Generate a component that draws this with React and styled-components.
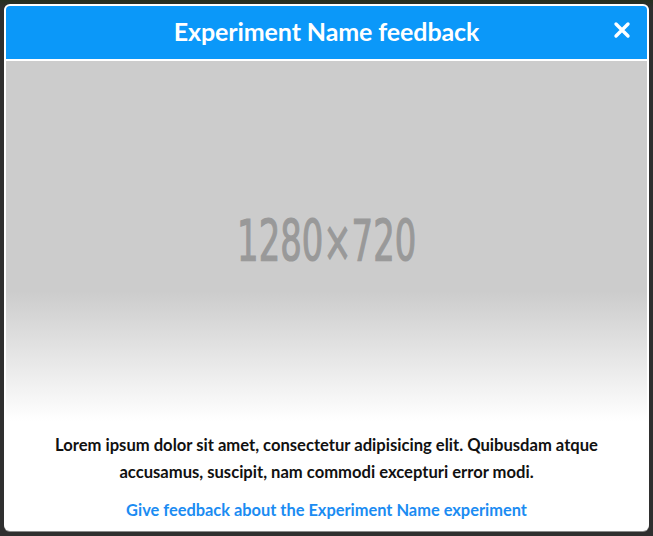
import React from "react";
import styled, { createGlobalStyle } from "styled-components";

const GlobalStyle = createGlobalStyle`
  html, body {
    margin: 0;
    padding: 0;
    background: #2f2f2f;
    font-family: Lato, "Open Sans", sans-serif;
  }
`;

const Backdrop = styled.div`
  width: 653px;
  height: 536px;
  box-sizing: border-box;
  padding: 4px 4px 0 4px;
  background: linear-gradient(180deg, #263020 0px, #2f2f2f 8px, #2f2f2f 100%);
`;

const Modal = styled.div`
  width: 645px;
  height: 527px;
  box-sizing: border-box;
  background: #ffffff;
  border-radius: 6px;
  padding: 2px;
  display: flex;
  flex-direction: column;
  box-shadow: 0 1px 0 #8a8a8a;
`;

const Header = styled.div`
  height: 53px;
  box-sizing: border-box;
  padding-bottom: 4px;
  background: #0b98f9;
  border-radius: 4px 4px 0 0;
  display: flex;
  align-items: center;
  justify-content: center;
  position: relative;
`;

const Title = styled.h1`
  margin: 0;
  color: #ffffff;
  font-size: 25px;
  font-weight: 700;
  letter-spacing: -0.1px;
`;

const CloseButton = styled.button`
  position: absolute;
  right: 16px;
  top: 15px;
  border: none;
  background: none;
  padding: 0;
  width: 18px;
  height: 18px;
  display: flex;
  cursor: pointer;
`;

const Placeholder = styled.div`
  margin-top: 2px;
  height: 360px;
  background: linear-gradient(180deg, #cccccc 0%, #cccccc 64%, #ffffff 100%);
  display: flex;
  align-items: center;
  justify-content: center;
`;

const PlaceholderText = styled.span`
  display: inline-block;
  font-family: "DejaVu Sans Condensed", "DejaVu Sans", sans-serif;
  font-size: 57px;
  font-weight: 400;
  color: #999999;
  -webkit-text-stroke: 1.2px #999999;
  transform: scaleX(0.66);
`;

const Body = styled.div`
  padding: 11px 30px 0;
  text-align: center;
`;

const Description = styled.p`
  margin: 0;
  font-size: 16.6px;
  line-height: 27px;
  font-weight: 700;
  color: #111111;
`;

const FeedbackLink = styled.a`
  display: inline-block;
  margin-top: 11px;
  font-size: 16.4px;
  line-height: 26px;
  font-weight: 700;
  color: #1b8cf2;
  text-decoration: none;
`;

function App() {
  return (
    <>
      <GlobalStyle />
      <Backdrop>
        <Modal>
          <Header>
            <Title>Experiment Name feedback</Title>
            <CloseButton aria-label="Close">
              <svg width="18" height="18" viewBox="0 0 18 18">
                <path
                  d="M3 3 L15 15 M15 3 L3 15"
                  stroke="#ffffff"
                  strokeWidth="3.4"
                  strokeLinecap="round"
                />
              </svg>
            </CloseButton>
          </Header>
          <Placeholder>
            <PlaceholderText>1280×720</PlaceholderText>
          </Placeholder>
          <Body>
            <Description>
              Lorem ipsum dolor sit amet, consectetur adipisicing elit.
              Quibusdam atque accusamus, suscipit, nam commodi excepturi error
              modi.
            </Description>
            <FeedbackLink href="#">
              Give feedback about the Experiment Name experiment
            </FeedbackLink>
          </Body>
        </Modal>
      </Backdrop>
    </>
  );
}

export default App;
